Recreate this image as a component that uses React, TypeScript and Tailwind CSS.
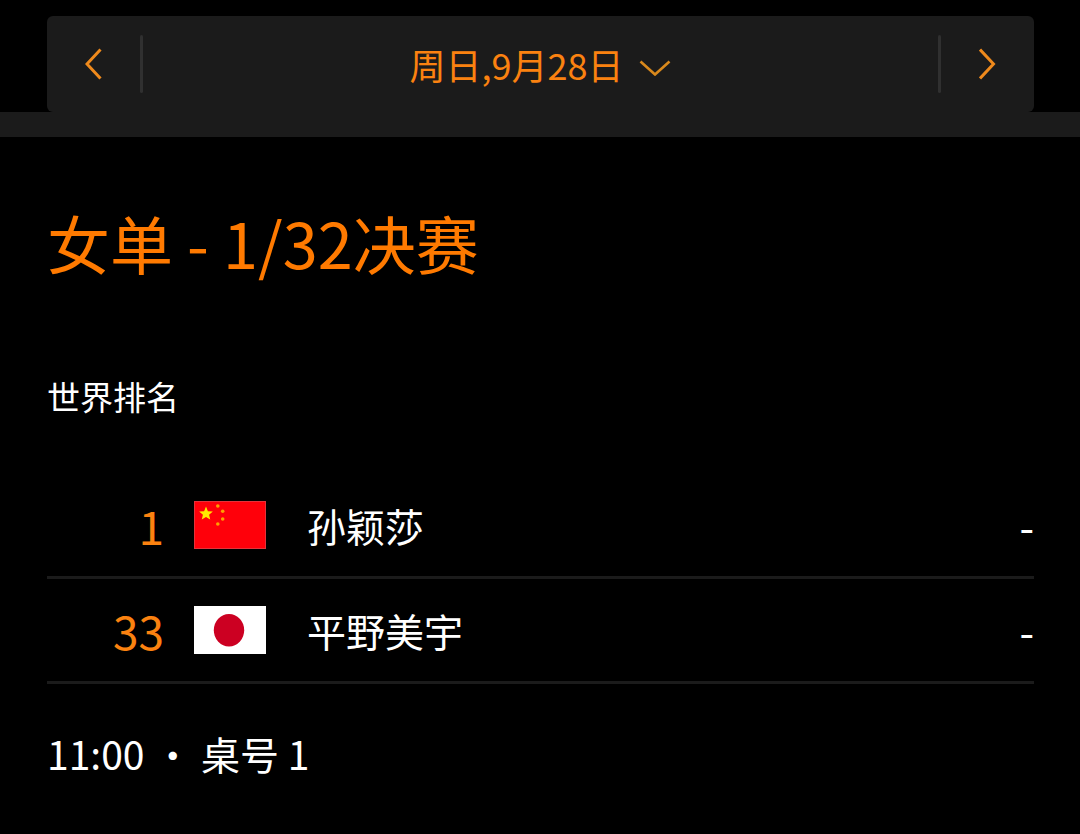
import type { ReactNode } from 'react';

type Player = {
  rank: number;
  name: string;
  score: string;
  flag: ReactNode;
};

function starPoints(cx: number, cy: number, radius: number) {
  return Array.from({ length: 10 }, (_, i) => {
    const r = i % 2 === 0 ? radius : radius * 0.45;
    const angle = (Math.PI / 5) * i - Math.PI / 2;
    return `${(cx + r * Math.cos(angle)).toFixed(2)},${(cy + r * Math.sin(angle)).toFixed(2)}`;
  }).join(' ');
}

function ChinaFlag() {
  return (
    <svg className="block h-12 w-[72px]" viewBox="0 0 72 48" role="img" aria-label="中国">
      <rect width="72" height="48" fill="#ff000a" />
      <rect x="0.5" y="0.5" width="71" height="47" fill="none" stroke="#e5323a" />
      <polygon points={starPoints(12, 12.8, 7.2)} fill="#ffea00" />
      <g fill="#ffa000">
        <circle cx="23.8" cy="5" r="1.8" />
        <circle cx="28.7" cy="10.2" r="1.8" />
        <circle cx="28.7" cy="18" r="1.8" />
        <circle cx="23.8" cy="23" r="1.8" />
      </g>
    </svg>
  );
}

function JapanFlag() {
  return (
    <svg className="block h-12 w-[72px]" viewBox="0 0 72 48" role="img" aria-label="日本">
      <rect width="72" height="48" fill="#ffffff" />
      <ellipse cx="35" cy="24.3" rx="15.2" ry="16.2" fill="#cc0022" />
    </svg>
  );
}

const players: Player[] = [
  { rank: 1, name: '孙颖莎', score: '-', flag: <ChinaFlag /> },
  { rank: 33, name: '平野美宇', score: '-', flag: <JapanFlag /> },
];

function DateBar() {
  return (
    <header>
      <div className="pl-[47px] pr-[46px] pt-4">
        <nav className="flex h-24 items-center rounded-md bg-[#1b1b1b] text-[#fb8210]">
          <button type="button" aria-label="前一天" className="flex h-full w-[93px] items-center justify-center">
            <svg className="h-8 w-[18px]" viewBox="0 0 18 32" fill="none" stroke="#ef8a1c" strokeWidth="3">
              <path d="M15.5 1.5 2 16l13.5 14.5" />
            </svg>
          </button>
          <div className="h-[58px] w-[3px] rounded-full bg-[#303030]" />
          <button type="button" className="flex h-full flex-1 items-center justify-center gap-4 text-[36px] leading-[48px]">
            周日,9月28日
            <svg className="mt-2 h-4 w-8" viewBox="0 0 32 16" fill="none" stroke="#d9891c" strokeWidth="2.6">
              <path d="M1.5 1.5 16 14.5l14.5-13" />
            </svg>
          </button>
          <div className="h-[58px] w-[3px] rounded-full bg-[#303030]" />
          <button type="button" aria-label="后一天" className="flex h-full w-[93px] items-center justify-center">
            <svg className="h-8 w-[18px]" viewBox="0 0 18 32" fill="none" stroke="#ef8a1c" strokeWidth="3">
              <path d="M1 1.5 14.5 16 1 30.5" />
            </svg>
          </button>
        </nav>
      </div>
      <div className="h-[25px] bg-[#1b1b1b]" />
    </header>
  );
}

export default function App() {
  return (
    <div className="min-h-screen bg-black font-['Noto_Sans_CJK_SC',sans-serif] text-white">
      <DateBar />
      <main className="pl-[47px] pr-[46px] pt-[60px]">
        <h1 className="mb-[85px] text-[63px] leading-[90px] text-[#ff7a00]">女单 - 1/32决赛</h1>
        <table className="w-full border-separate border-spacing-0 text-[39px] leading-[50px]">
          <thead>
            <tr>
              <th colSpan={4} className="p-0 pb-[54px] text-left text-[33px] font-normal leading-[48px]">
                世界排名
              </th>
            </tr>
          </thead>
          <tbody>
            {players.map((player) => (
              <tr key={player.rank}>
                <td className="h-[105px] w-[147px] border-b-3 border-[#1b1b1b] p-0 pr-[30px] text-right text-[46px] text-[#fb8210]">
                  {player.rank}
                </td>
                <td className="w-[72px] border-b-3 border-[#1b1b1b] p-0">{player.flag}</td>
                <td className="border-b-3 border-[#1b1b1b] p-0 pl-[41px]">{player.name}</td>
                <td className="border-b-3 border-[#1b1b1b] p-0 text-right text-[42px]">{player.score}</td>
              </tr>
            ))}
          </tbody>
        </table>
        <p className="pt-11 text-[39px] leading-[50px]">11:00 ・ 桌号 1</p>
      </main>
    </div>
  );
}
